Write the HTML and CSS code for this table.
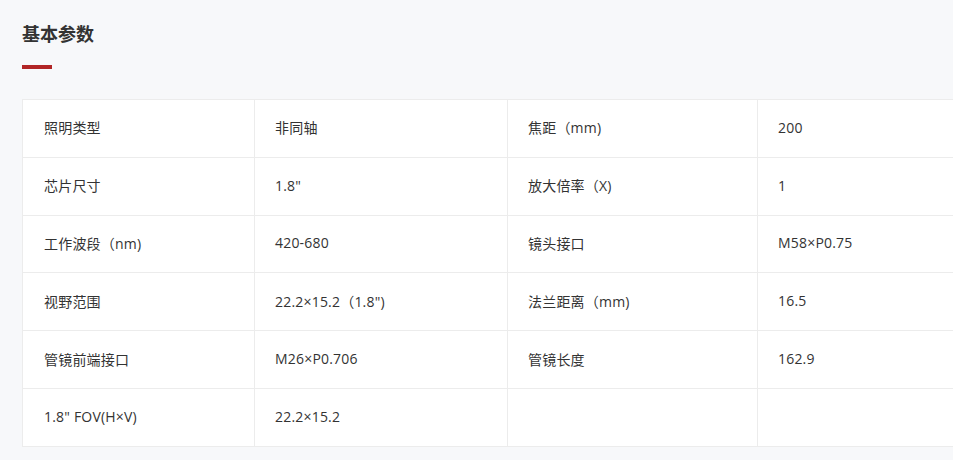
FILE: index.html
```html
<!DOCTYPE html>
<html lang="zh">
<head>
<meta charset="utf-8">
<link rel="stylesheet" href="styles.css">
</head>
<body>
<section class="params">
  <h2 class="title">基本参数</h2>
  <div class="title-bar"></div>
  <table class="spec">
    <colgroup>
      <col class="c1"><col class="c2"><col class="c3"><col class="c4">
    </colgroup>
    <tbody>
      <tr><td>照明类型</td><td>非同轴</td><td>焦距（mm)</td><td>200</td></tr>
      <tr><td>芯片尺寸</td><td>1.8"</td><td>放大倍率（X)</td><td>1</td></tr>
      <tr><td>工作波段（nm)</td><td>420-680</td><td>镜头接口</td><td>M58×P0.75</td></tr>
      <tr><td>视野范围</td><td>22.2×15.2（1.8")</td><td>法兰距离（mm)</td><td>16.5</td></tr>
      <tr><td>管镜前端接口</td><td>M26×P0.706</td><td>管镜长度</td><td>162.9</td></tr>
      <tr><td>1.8" FOV(H×V)</td><td>22.2×15.2</td><td></td><td></td></tr>
    </tbody>
  </table>
</section>
</body>
</html>
```
FILE: styles.css
```css
html, body {
  margin: 0;
  padding: 0;
  overflow: hidden;
  background: #f7f8fa;
}
body {
  font-family: "Open Sans", "Noto Sans CJK SC", sans-serif;
  color: #333;
  width: 953px;
  height: 460px;
}
.params {
  padding: 20px 0 0 22px;
}
.title {
  margin: 0;
  font-family: "Noto Sans CJK SC", sans-serif;
  font-size: 18px;
  font-weight: bold;
  line-height: 26px;
  color: #333;
}
.title-bar {
  width: 30px;
  height: 4px;
  background: #b12526;
  margin-top: 19px;
}
.spec {
  margin-top: 30px;
  border-collapse: collapse;
  table-layout: fixed;
  width: 985px;
  background: #fff;
}
.c1 { width: 232px; }
.c2 { width: 253px; }
.c3 { width: 250px; }
.c4 { width: 250px; }
.spec td {
  border: 1px solid #ececec;
  height: 57.8px;
  padding: 0 0 2px 20px;
  font-size: 14px;
  letter-spacing: 0.2px;
  color: #333;
  vertical-align: middle;
  box-sizing: border-box;
}
.spec td:first-child {
  padding-left: 21px;
}
```
